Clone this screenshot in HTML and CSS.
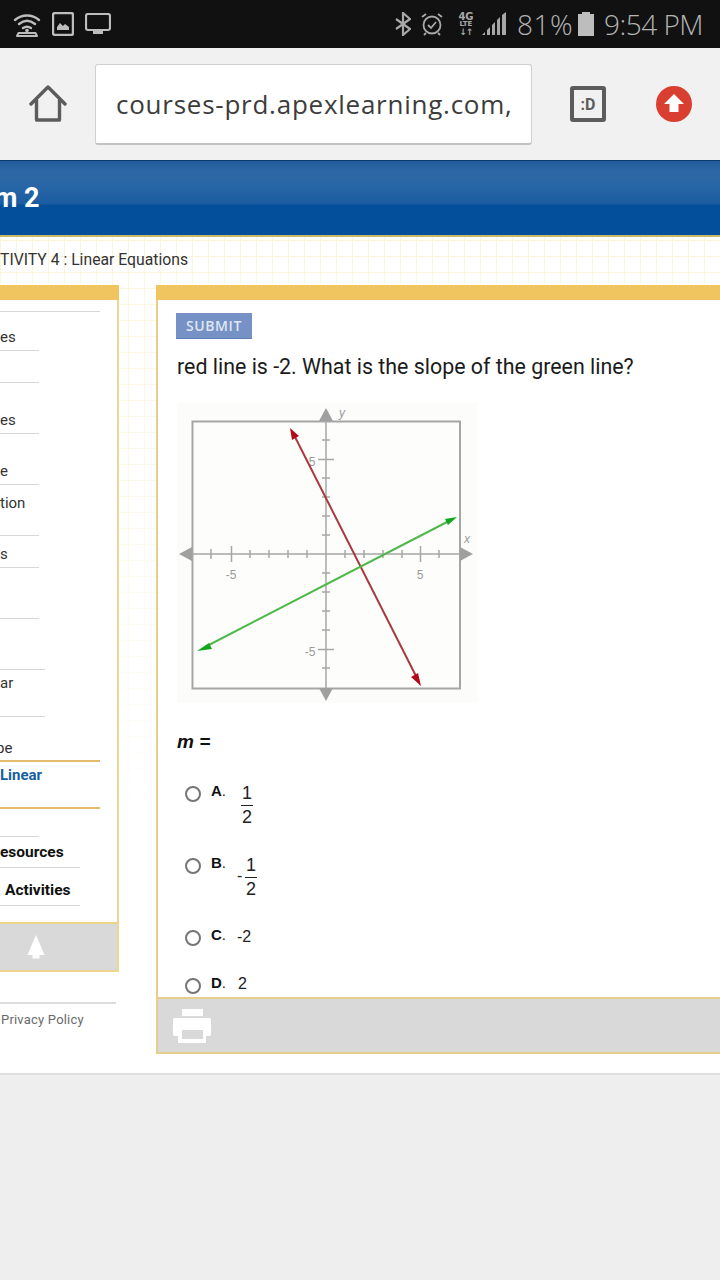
FILE: index.html
```html
<!DOCTYPE html>
<html lang="en">
<head>
<meta charset="utf-8">
<title>Linear Equations</title>
<link rel="stylesheet" href="styles.css">
</head>
<body>
<div class="status">
  <div class="status-left">
    <svg class="ic" width="28" height="26" viewBox="0 0 28 26" fill="none" stroke="#bdbdbd" stroke-width="2.400" stroke-linecap="round">
      <path d="M2 9c7-6 17-6 24 0"/><path d="M6 13c5-4 11-4 16 0"/><path d="M10 17c3-2 5-2 8 0"/>
      <circle cx="14" cy="19.500" r="1.800" fill="#bdbdbd" stroke="none"/>
      <path d="M4 25l1.500-3h17l1.500 3z" stroke-width="2" stroke-linejoin="round"/>
    </svg>
    <svg class="ic" width="22" height="24" viewBox="0 0 22 24">
      <rect x="1" y="1" width="20" height="22" rx="2" fill="none" stroke="#bdbdbd" stroke-width="2.400"/>
      <path d="M5 18v-3l3-4 3 3 2-2 4 3v3z" fill="#bdbdbd"/>
    </svg>
    <svg class="ic" width="26" height="22" viewBox="0 0 26 22">
      <rect x="1" y="1" width="24" height="16" rx="2" fill="none" stroke="#bdbdbd" stroke-width="2.200"/>
      <rect x="8" y="18" width="10" height="3" fill="#bdbdbd"/>
    </svg>
  </div>
  <div class="status-right">
    <svg class="bt" width="16" height="24" viewBox="0 0 16 24" fill="none" stroke="#a8a8a8" stroke-width="2.200">
      <path d="M1 7l14 10-7 6V1l7 6L1 17"/>
    </svg>
    <svg class="alarm" width="22" height="24" viewBox="0 0 22 24" fill="none" stroke="#a8a8a8" stroke-width="1.800">
      <circle cx="11" cy="13" r="8.500"/><path d="M7 13l3 3 5-6"/><path d="M1 5l4-3M21 5l-4-3M5 21l-2 2M17 21l2 2"/>
    </svg>
    <div class="net"><span class="g">4G</span><span class="l">LTE</span><span class="a">↓↑</span></div>
    <svg class="sig" width="25" height="24" viewBox="0 0 25 24" fill="#a8a8a8">
      <path d="M0 23l3-3v3zM5 23v-5l3-3v8zM10 23V13l3-3v13zM15 23V8l3-3v18zM20 23V3l4-3v23z"/>
    </svg>
    <span class="pct">81%</span>
    <svg class="batt" width="16" height="24" viewBox="0 0 16 24" fill="#bdbdbd"><path d="M4 0h8v2h4v22H0V2h4z"/></svg>
    <span class="time">9:54 PM</span>
  </div>
</div>

<div class="toolbar">
  <svg class="home" width="38" height="38" viewBox="0 0 38 38" fill="none" stroke="#5c5c5c" stroke-width="3.400" stroke-linejoin="round" stroke-linecap="round">
    <path d="M2 19L19 2l17 17"/><path d="M7.500 15v20h23V15"/>
  </svg>
  <div class="url"><span class="url-text">courses-prd.apexlearning.com,</span></div>
  <div class="tabs">:D</div>
  <svg class="up" width="36" height="36" viewBox="0 0 36 36">
    <circle cx="18" cy="18" r="18" fill="#d93f30"/>
    <path d="M18 8l10 10h-5.500v8h-9v-8H8z" fill="#fff"/>
  </svg>
</div>

<header class="banner"><h1 class="banner-title">m 2</h1></header>

<main class="page">
  <div class="crumb">TIVITY 4 : Linear Equations</div>
  <div class="cols">
    <div class="left">
      <aside class="side">
        <div class="panel-head"></div>
        <nav class="nav">
          <div class="row h11 wide"></div>
          <div class="row h39 short">es</div>
          <div class="row h32 short"></div>
          <div class="row h51 short">es</div>
          <div class="row h51 short">e</div>
          <div class="row h51 short top low">tion</div>
          <div class="row h32 short">s</div>
          <div class="row h51 short"></div>
          <div class="row h51 mid"></div>
          <div class="row h47 mid top">ar</div>
          <div class="row h45 wide cur-top clip">pe</div>
          <div class="row h47 wide cur top">Linear</div>
          <div class="row h28 short"></div>
          <div class="row h31 long strong">esources</div>
          <div class="row h38 long strong ind">Activities</div>
        </nav>
        <div class="side-foot">
          <svg width="18" height="24" viewBox="0 0 18 24"><path d="M9 0L17.500 20H12.500V23.500H5.500V20H.5z" fill="#fff"/></svg>
        </div>
      </aside>
      <div class="legal">Privacy Policy</div>
    </div>

    <section class="content">
      <div class="panel-head"></div>
      <div class="scroll">
        <button class="submit" type="button">SUBMIT</button>
        <p class="question">red line is -2. What is the slope of the green line?</p>
        <svg class="graph" width="300" height="300" viewBox="177 403 300 300">
          <rect x="177" y="403" width="300" height="300" fill="#fcfdfb"/>
          <rect x="192.500" y="421.500" width="267.500" height="267" fill="#fdfefc" stroke="#a6a6a6" stroke-width="2"/>
          <g stroke="#a6a6a6" stroke-width="1.500" fill="none">
            <path d="M190 554h272M326 416v276"/>
            <path d="M211 549v10M250 550v8M269 550v8M288 550v8M307 550v8M345 550v8M364 550v8M383 550v8M402 550v8M439 550v8"/>
            <path d="M231.500 546v16M420.500 546v16"/>
            <path d="M322 440h8M322 478h8M322 497h8M322 516h8M322 535h8M322 573h8M322 592h8M322 611h8M322 630h8M322 668h8"/>
            <path d="M318 459.500h16M318 649.500h16"/>
          </g>
          <g fill="#a0a0a0">
            <path d="M179 554l13-7v14zM473 554l-13-7v14zM326 408l-7 13h14zM326 701l-7-13h14z"/>
          </g>
          <g class="glabel">
            <text x="231" y="579" text-anchor="middle">-5</text>
            <text x="420" y="579" text-anchor="middle">5</text>
            <text x="312" y="466" text-anchor="middle">5</text>
            <text x="310" y="656" text-anchor="middle">-5</text>
            <text class="ax" x="342" y="417" text-anchor="middle">y</text>
            <text class="ax" x="467" y="543" text-anchor="middle">x</text>
          </g>
          <path d="M293 433L418 680" stroke="#a83a3f" stroke-width="2" fill="none"/>
          <path d="M290 428l2 12 7-4zM421 686l-10-9 7-4z" fill="#b00d1c"/>
          <path d="M205 647L449 521" stroke="#4fb84a" stroke-width="2" fill="none"/>
          <path d="M197 651l12-8 3 6zM457 517l-12 2 3 6z" fill="#12a51e"/>
        </svg>
        <p class="prompt"><em>m</em> =</p>
        <ul class="answers">
          <li class="ans ans-frac">
            <span class="radio"></span><span class="letter"><b>A</b>.</span>
            <span class="val val-a"><span class="frac"><span class="num">1</span><span class="den">2</span></span></span>
          </li>
          <li class="ans ans-frac">
            <span class="radio"></span><span class="letter"><b>B</b>.</span>
            <span class="val"><span class="minus">-</span><span class="frac"><span class="num">1</span><span class="den">2</span></span></span>
          </li>
          <li class="ans ans-c">
            <span class="radio"></span><span class="letter"><b>C</b>.</span>
            <span class="val">-2</span>
          </li>
          <li class="ans ans-d">
            <span class="radio"></span><span class="letter"><b>D</b>.</span>
            <span class="val">2</span>
          </li>
        </ul>
      </div>
      <div class="content-foot">
        <svg width="38" height="34" viewBox="0 0 38 34" fill="#fff">
          <rect x="9" y="0" width="21" height="7"/>
          <rect x="0" y="9" width="38" height="18" rx="2"/>
          <rect x="5" y="18" width="28" height="16"/>
          <rect class="print-gap" x="9" y="21" width="21" height="9"/>
        </svg>
      </div>
    </section>
  </div>
</main>
</body>
</html>
```

FILE: styles.css
```css
* { box-sizing: border-box; }
html, body { margin: 0; padding: 0; }
body {
  width: 720px;
  height: 1280px;
  overflow: hidden;
  background: #eeeeee;
  font-family: Roboto, "Liberation Sans", sans-serif;
}

/* status bar */
.status {
  height: 48px;
  background: #111111;
  display: flex;
  justify-content: space-between;
  align-items: center;
}
.status-left { display: flex; align-items: center; gap: 11px; padding-left: 13px; }
.status-right { display: flex; align-items: center; padding-right: 17px; color: #a8a8a8; }
.bt { margin-right: 10px; }
.alarm { margin-right: 15px; }
.net {
  width: 16px;
  margin-right: 8px;
  display: flex;
  flex-direction: column;
  align-items: center;
  font-family: "DejaVu Sans", sans-serif;
  font-weight: 700;
  color: #a8a8a8;
}
.net .g { font-size: 10px; line-height: 9px; }
.net .l { font-size: 7px; line-height: 7px; }
.net .a { font-size: 9px; line-height: 9px; letter-spacing: -1px; }
.sig { margin-right: 10px; }
.pct, .time {
  font-family: "Open Sans", sans-serif;
  font-size: 28px;
  font-weight: 300;
  line-height: 48px;
  color: #b4b4b4;
}
.pct { margin-right: 5px; letter-spacing: 0.5px; }
.batt { margin-right: 10px; }
.time { letter-spacing: -0.500px; }

/* browser toolbar */
.toolbar {
  height: 112px;
  background: #f1f1f1;
  display: flex;
  align-items: center;
}
.home { margin-left: 29px; }
.url {
  width: 437px;
  height: 81px;
  margin-left: 28px;
  padding-left: 20px;
  background: #fff;
  border: 1px solid #d0d0d0;
  border-bottom: 2px solid #c2c2c2;
  border-radius: 3px;
  display: flex;
  align-items: center;
  overflow: hidden;
}
.url-text {
  font-family: "Open Sans", sans-serif;
  font-size: 26px;
  letter-spacing: 0.750px;
  color: #3c3c3c;
  white-space: nowrap;
}
.tabs {
  width: 36px;
  height: 36px;
  margin-left: 38px;
  border: 4px solid #5c5c5c;
  border-radius: 3px;
  display: flex;
  align-items: center;
  justify-content: center;
  font-size: 16px;
  font-weight: 700;
  color: #5c5c5c;
}
.up { margin-left: 50px; }

/* course banner */
.banner {
  height: 77px;
  border-top: 1px solid #0a3a70;
  border-bottom: 2px solid #c9b96a;
  background: linear-gradient(#1f5c9c 0, #2f67a4 10px, #2766a6 26px, #1a5ca0 43px, #034f9b 44px, #034f9b 100%);
  display: flex;
  align-items: flex-start;
}
.banner-title {
  margin: 21px 0 0 -6px;
  font-size: 27px;
  line-height: 32px;
  font-weight: 700;
  color: #fff;
}

/* page body */
.page {
  height: 838px;
  border-bottom: 2px solid #dedede;
  background-color: #fff;
  background-image:
    linear-gradient(rgba(255,255,255,0) 0, rgba(255,255,255,0.95) 600px),
    repeating-linear-gradient(90deg, #fbf5dc 0 1px, transparent 1px 16px),
    repeating-linear-gradient(0deg, #fbf5dc 0 1px, transparent 1px 16px);
}
.crumb {
  height: 48px;
  padding-top: 14px;
  font-size: 15.750px;
  line-height: 18px;
  color: #333;
  white-space: nowrap;
}
.cols { display: flex; gap: 37px; align-items: flex-start; }
.left { width: 119px; }

.panel-head { height: 15px; background: #f0c45e; }

/* sidebar */
.side {
  height: 687px;
  background: #fff;
  border-right: 2px solid #eed692;
  display: flex;
  flex-direction: column;
}
.side > .panel-head { margin-right: -2px; }
.nav { flex: 1; font-size: 15px; line-height: 18px; color: #333; }
.row {
  display: flex;
  align-items: flex-end;
  padding-bottom: 4px;
  border-bottom: 1px solid #d6d6d6;
  white-space: nowrap;
}
.row.top { align-items: flex-start; padding-top: 4px; }
.row.top.low { padding-top: 9px; }
.row.clip { padding-bottom: 3px; text-indent: -4px; }
.h11 { height: 12px; }
.h28 { height: 28px; }
.h31 { height: 31px; }
.h32 { height: 32px; }
.h38 { height: 38px; }
.h39 { height: 39px; }
.h45 { height: 45px; }
.h47 { height: 47px; }
.h51 { height: 51px; }
.wide { width: 100px; }
.short { width: 39px; }
.mid { width: 45px; }
.long { width: 80px; }
.cur-top { border-bottom: 2px solid #e5b96e; }
.cur { border-bottom: 2px solid #e5b96e; font-weight: 700; color: #14609e; }
.strong { padding-bottom: 6px; font-size: 15.500px; font-weight: 700; color: #111; }
.ind { padding-left: 5px; }
.side-foot {
  height: 50px;
  background: #d9d9d9;
  border-top: 2px solid #ecd48c;
  border-bottom: 2px solid #ecd48c;
  display: flex;
  align-items: center;
  padding-left: 27px;
}
.legal {
  width: 116px;
  margin-top: 30px;
  padding: 8px 0 0 1px;
  border-top: 2px solid #dcdcdc;
  font-size: 13px;
  line-height: 16px;
  letter-spacing: 0.2px;
  color: #6a6a6a;
  white-space: nowrap;
}

/* question panel */
.content {
  width: 564px;
  height: 769px;
  background: #fff;
  border-left: 2px solid #e5cf8a;
  display: flex;
  flex-direction: column;
}
.content > .panel-head { margin-left: -2px; }
.scroll { height: 697px; padding: 13px 0 0 18px; overflow: hidden; }
.submit {
  display: block;
  width: 76px;
  height: 26px;
  margin: 0;
  padding: 0;
  border: 0;
  border-bottom: 1px solid #5f7db4;
  background: #7591c6;
  font-family: "Open Sans", sans-serif;
  font-size: 14px;
  font-weight: 600;
  letter-spacing: 0.6px;
  color: #dfe6f2;
}
.question {
  margin: 14px 0 0 1px;
  font-size: 21.400px;
  line-height: 28px;
  color: #1b1b1b;
  white-space: nowrap;
}
.graph { display: block; margin: 22px 0 0 1px; }
.glabel text { font-family: "Liberation Sans", sans-serif; font-size: 12px; fill: #9a9a9a; }
.glabel .ax { font-style: italic; }
.prompt {
  margin: 27px 0 0 1px;
  font-family: "Liberation Sans", sans-serif;
  font-size: 19px;
  font-weight: 700;
  line-height: 24px;
  font-style: italic;
  color: #111;
}
.answers {
  list-style: none;
  margin: 29px 0 0 9px;
  padding: 0;
  font-family: "Liberation Sans", sans-serif;
  color: #222;
}
.ans { display: flex; align-items: flex-start; }
.ans-frac { height: 72px; }
.ans-c { height: 48px; }
.ans-d { height: 24px; }
.radio {
  width: 16px;
  height: 16px;
  margin-top: 3px;
  flex: none;
  border: 2px solid #757575;
  border-radius: 50%;
  background: #fff;
}
.letter {
  width: 26px;
  margin: -1px 0 0 10px;
  font-size: 15px;
  line-height: 18px;
  color: #222;
  font-weight: 400;
}
.letter b { color: #111; }
.val { font-size: 16px; line-height: 20px; display: flex; align-items: flex-start; }
.val-a { margin-left: 4px; }
.minus { margin-top: 11px; width: 8px; }
.frac { display: flex; flex-direction: column; align-items: center; width: 12px; font-size: 18px; line-height: 18px; margin-top: 1px; }
.num { border-bottom: 1px solid #222; width: 12px; text-align: center; height: 22px; }
.den { height: 18px; margin-top: 2px; }
.ans-c .val { margin-top: 0; }
.ans-d .val { margin-left: 1px; margin-top: -1px; }

.content-foot {
  flex: 1;
  margin-left: -2px;
  background: #d9d9d9;
  border: 2px solid #e5cf8a;
  border-right: 0;
  display: flex;
  align-items: center;
  padding-left: 15px;
}
.print-gap { fill: #d9d9d9; }
```
